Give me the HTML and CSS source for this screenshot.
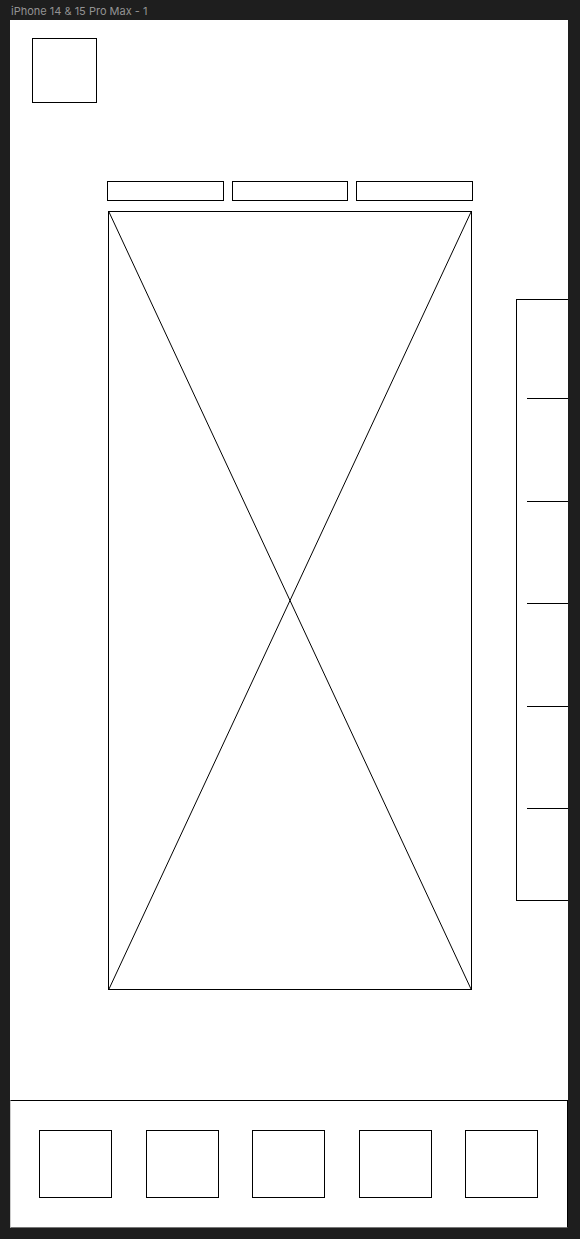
FILE: index.html
```html
<!DOCTYPE html>
<html lang="en">
<head>
    <meta charset="UTF-8">
    <meta name="viewport" content="width=device-width, initial-scale=1.0">
    <title>iPhone 14 &amp; 15 Pro Max - 1</title>
    <link rel="stylesheet" href="styles.css">
</head>
<body>
    <div class="frame-label">iPhone 14 &amp; 15 Pro Max - 1</div>

    <div class="frame">
        <div class="logo-box"></div>

        <div class="main">
            <div class="center">
                <div class="tabs">
                    <div class="tab"></div>
                    <div class="tab"></div>
                    <div class="tab"></div>
                </div>
                <div class="placeholder">
                    <svg viewBox="0 0 362 776" preserveAspectRatio="none">
                        <line x1="0" y1="0" x2="362" y2="776" />
                        <line x1="362" y1="0" x2="0" y2="776" />
                    </svg>
                </div>
            </div>

            <div class="side">
                <div class="cell"></div>
                <div class="cell"></div>
                <div class="cell"></div>
                <div class="cell"></div>
                <div class="cell"></div>
                <div class="cell last"></div>
            </div>
        </div>

        <div class="dock">
            <div class="dock-item"></div>
            <div class="dock-item"></div>
            <div class="dock-item"></div>
            <div class="dock-item"></div>
            <div class="dock-item"></div>
        </div>
    </div>
</body>
</html>
```

FILE: styles.css
```css
* {
    box-sizing: border-box;
}

body, html {
    margin: 0;
    padding: 0;
    background: #1e1e1e;
    font-family: Inter, "Noto Sans", sans-serif;
}

.frame-label {
    height: 20px;
    padding: 3px 0 0 11px;
    line-height: 17px;
    font-size: 11px;
    color: #939393;
}

.frame {
    display: flex;
    flex-direction: column;
    width: 558px;
    height: 1208px;
    margin-left: 10px;
    background: #ffffff;
}

.logo-box {
    width: 65px;
    height: 65px;
    margin: 18px 0 0 22px;
    border: 1px solid #000;
}

.main {
    display: flex;
    margin-top: 78px; /* tabs start at 161 */
}

.center {
    width: 366px;
    margin-left: 97px;
}

.tabs {
    display: grid;
    grid-template-columns: repeat(3, 1fr);
    gap: 8px;
}

.tab {
    height: 20px;
    border: 1px solid #000;
}

.placeholder {
    width: 364px;
    height: 779px;
    margin: 10px 0 0 1px;
    border: 1px solid #000;
}

.placeholder svg {
    display: block;
    width: 100%;
    height: 100%;
}

.placeholder line {
    stroke: #000;
    stroke-width: 1;
    vector-effect: non-scaling-stroke;
}

.side {
    display: flex;
    flex-direction: column;
    width: 52px;
    height: 602px;
    margin: 118px 0 0 auto; /* panel top at 279 */
    border: 1px solid #000;
    border-right: none;
}

.cell {
    height: 102.5px;
    margin-left: 10px;
    border-bottom: 1px solid #000;
}

.cell:first-child {
    height: 99px;
}

.cell.last {
    flex: 1;
    border-bottom: none;
}

.dock {
    display: flex;
    gap: 33.5px;
    height: 128px;
    margin-top: auto;
    padding: 29px 0 0 28px;
    border: 1px solid #000;
    border-left-color: #ccc;
    border-bottom-color: #777;
}

.dock-item {
    width: 73px;
    height: 68px;
    border: 1px solid #000;
}
```
